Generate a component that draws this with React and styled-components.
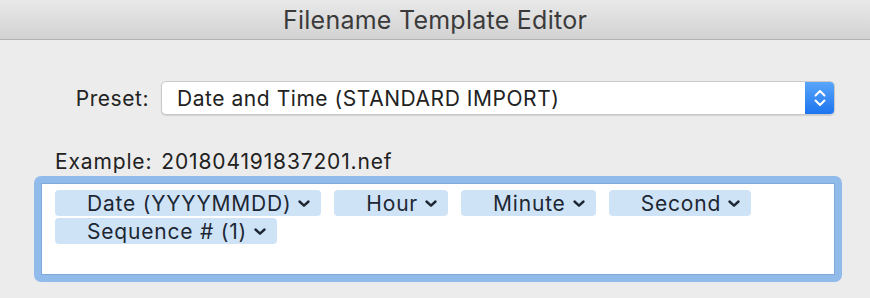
import styled, {createGlobalStyle} from "styled-components";

const GlobalStyle = createGlobalStyle`
  html, body {
    margin: 0;
    padding: 0;
    background: #ececec;
  }
  body {
    font-family: Inter, "Liberation Sans", sans-serif;
    -webkit-font-smoothing: antialiased;
  }
`;

const Window = styled.div`
  width: 870px;
  height: 298px;
  display: flex;
  flex-direction: column;
  background: #ececec;
  overflow: hidden;
`;

const TitleBar = styled.div`
  height: 39px;
  flex-shrink: 0;
  display: flex;
  align-items: center;
  justify-content: center;
  background: linear-gradient(#e9e9e9, #d2d2d2);
  border-bottom: 1px solid #b3b3b3;
  color: #3b3b3b;
  font-size: 25px;
  letter-spacing: 0.25px;
`;

const PresetRow = styled.div`
  display: flex;
  align-items: center;
  margin-top: 41px;
`;

const Label = styled.div`
  width: ${(p) => p.width}px;
  text-align: right;
  margin-right: 12px;
  font-size: 21px;
  color: #222;
  letter-spacing: 0.55px;
`;

const Select = styled.div`
  width: 674px;
  height: 34px;
  box-sizing: border-box;
  display: flex;
  align-items: center;
  background: #fff;
  border: 1px solid #c9c9c9;
  border-radius: 5px;
  box-shadow: 0 1px 1px rgba(0, 0, 0, 0.12);
  overflow: hidden;
`;

const SelectText = styled.div`
  flex: 1;
  padding-left: 15px;
  font-size: 21px;
  color: #222;
  letter-spacing: 0.55px;
`;

const Stepper = styled.div`
  width: 29px;
  height: 100%;
  display: flex;
  align-items: center;
  justify-content: center;
  background: linear-gradient(#5aa6fb, #1c74ef);
`;

const ExampleRow = styled.div`
  display: flex;
  align-items: center;
  gap: 9px;
  margin-top: 34px;
  padding-left: 55px;
  height: 24px;
  font-size: 21px;
  color: #222;
  letter-spacing: 0.85px;
`;

const TokenField = styled.div`
  margin: 3px 0 0 34px;
  width: 808px;
  height: 106px;
  box-sizing: border-box;
  border: 7px solid #91bbeb;
  border-radius: 7px;
  background: #fff;
  box-shadow: inset 0 0 0 1px #80a9dc;
  padding: 7px 14px;
  display: flex;
  flex-wrap: wrap;
  align-content: flex-start;
  column-gap: 13px;
  row-gap: 2px;
`;

const Token = styled.div`
  height: 26px;
  display: flex;
  align-items: center;
  gap: 6px;
  padding: 0 10px 0 32px;
  background: #cfe3f7;
  border-radius: 4px;
  font-size: 21px;
  color: #1d2733;
  letter-spacing: 0.8px;
`;

const Chevron = () => (
  <svg width="14" height="9" viewBox="0 0 14 9">
    <path d="M2.5 2.5 L7 6.7 L11.5 2.5" fill="none" stroke="#1d2733" strokeWidth="2.4" strokeLinecap="round" strokeLinejoin="round"/>
  </svg>
);

const UpDown = () => (
  <svg width="16" height="22" viewBox="0 0 16 22">
    <path d="M3.5 8.5 L8 4 L12.5 8.5" fill="none" stroke="#fff" strokeWidth="2" strokeLinecap="round" strokeLinejoin="round"/>
    <path d="M3.5 13.5 L8 18 L12.5 13.5" fill="none" stroke="#fff" strokeWidth="2" strokeLinecap="round" strokeLinejoin="round"/>
  </svg>
);

const tokens = ["Date (YYYYMMDD)", "Hour", "Minute", "Second", "Sequence # (1)"];

const App = () => {
  return <Window>
    <GlobalStyle/>
    <TitleBar>Filename Template Editor</TitleBar>
    <PresetRow>
      <Label width={149}>Preset:</Label>
      <Select>
        <SelectText>Date and Time (STANDARD IMPORT)</SelectText>
        <Stepper><UpDown/></Stepper>
      </Select>
    </PresetRow>
    <ExampleRow>
      <span>Example:</span>
      <span>201804191837201.nef</span>
    </ExampleRow>
    <TokenField>
      {tokens.map((t) => (
        <Token key={t}>
          {t}
          <Chevron/>
        </Token>
      ))}
    </TokenField>
  </Window>
}

export default App;
